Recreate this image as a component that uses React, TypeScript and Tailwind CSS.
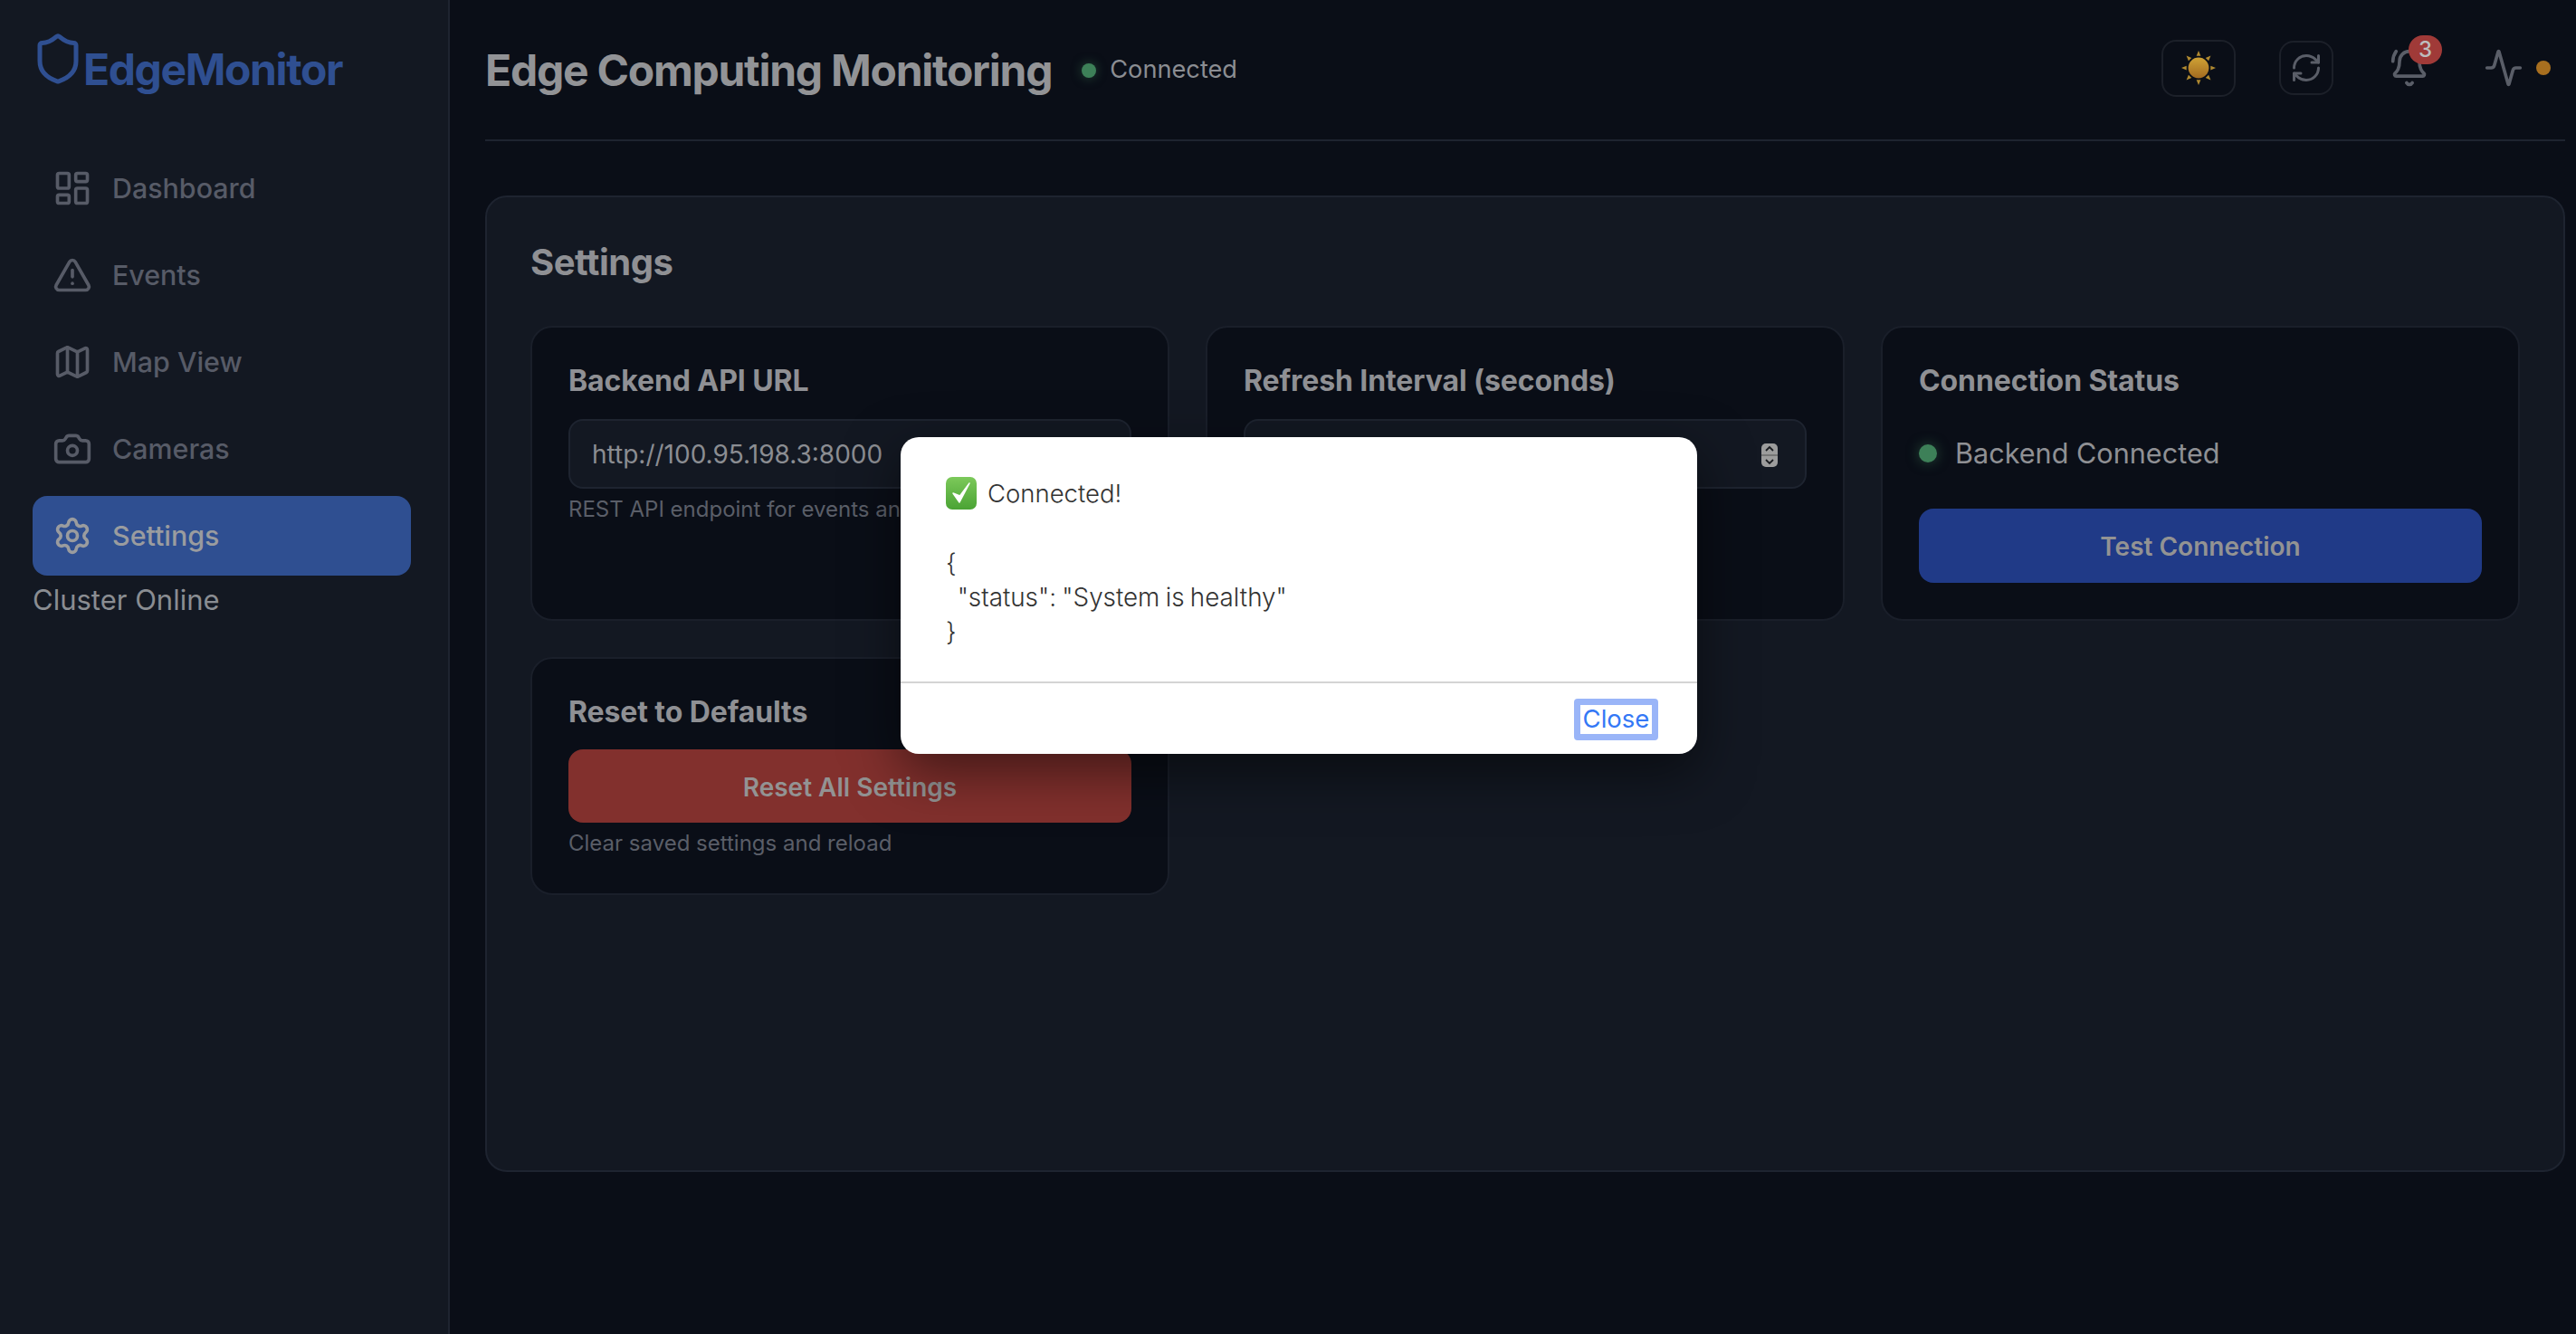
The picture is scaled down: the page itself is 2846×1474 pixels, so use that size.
import { Activity, BellRing, Camera, LayoutDashboard, Map as MapIcon, RefreshCw, Settings, Shield, TriangleAlert } from 'lucide-react';

const navItems = [
  { label: 'Dashboard', icon: LayoutDashboard },
  { label: 'Events', icon: TriangleAlert },
  { label: 'Map View', icon: MapIcon },
  { label: 'Cameras', icon: Camera },
  { label: 'Settings', icon: Settings, active: true },
];

function SunEmoji() {
  const rays = [0, 45, 90, 135, 180, 225, 270, 315];
  return (
    <svg width="38" height="38" viewBox="0 0 40 40">
      <defs>
        <linearGradient id="sunFill" x1="0" y1="0" x2="0" y2="1">
          <stop offset="0" stopColor="#cfa235" />
          <stop offset="1" stopColor="#a26a20" />
        </linearGradient>
      </defs>
      {rays.map((r) => (
        <polygon key={r} points="17.500,6 22.500,6 20,0" fill="#b08a30" transform={`rotate(${r} 20 20)`} />
      ))}
      <circle cx="20" cy="20" r="12" fill="url(#sunFill)" />
    </svg>
  );
}

function CheckEmoji() {
  return (
    <svg width="34" height="36" viewBox="0 0 34 36">
      <defs>
        <linearGradient id="checkFill" x1="0" y1="0" x2="0" y2="1">
          <stop offset="0" stopColor="#7cc95a" />
          <stop offset="1" stopColor="#4aa334" />
        </linearGradient>
      </defs>
      <rect x="0" y="0" width="34" height="36" rx="7" fill="url(#checkFill)" />
      <path d="M8 18l7 10L26 7l-10.500 14z" fill="#fff" stroke="#fff" strokeWidth="1.500" strokeLinejoin="round" />
    </svg>
  );
}

function Spinner() {
  return (
    <svg width="18" height="26" viewBox="0 0 18 26" className="absolute right-[30px] top-[25px]">
      <rect width="18" height="26" rx="5" fill="#9c9c9c" />
      <rect y="12" width="18" height="2" fill="#767676" />
      <path d="M5 8l4-4 4 4M5 18l4 4 4-4" fill="none" stroke="#1a1c20" strokeWidth="1.800" />
    </svg>
  );
}

function Sidebar() {
  return (
    <aside className="flex h-[1474px] w-[497px] shrink-0 flex-col border-r-2 border-[#1e2430] bg-[#131822] pl-[36px] pr-[41px]">
      <div className="flex h-[164px] items-start pl-[2px] pt-[36px]">
        <Shield size={60} strokeWidth={2} className="-mt-[1px] -ml-[4px] -mr-[2px] text-[#2f4f91]" />
        <span className="pt-[12px] text-[48px] font-bold leading-[58px] tracking-[-1.400px] text-[#2f4f91]">EdgeMonitor</span>
      </div>
      <nav className="flex flex-col gap-[8px]">
        {navItems.map(({ label, icon: Icon, active }) => (
          <div
            key={label}
            className={
              active
                ? 'flex h-[88px] items-center gap-[22px] rounded-[16px] bg-[#2f4f91] pl-[22px] text-[#9a9c9f]'
                : 'flex h-[88px] items-center gap-[22px] rounded-[16px] pl-[22px] text-[#575b67]'
            }
          >
            <Icon size={44} strokeWidth={2} />
            <span className="pt-[2px] text-[30.400px] font-medium">{label}</span>
          </div>
        ))}
      </nav>
      <div className="mt-[7px] text-[31px] leading-[40px] text-[#8a8d92]">Cluster Online</div>
    </aside>
  );
}

function Header() {
  return (
    <header className="flex h-[156px] items-center border-b-2 border-[#1e2430] pb-[4px]">
      <div className="flex items-center pt-[5px]">
        <h1 className="text-[48px] font-bold tracking-[-1.250px] text-[#929396]">Edge Computing Monitoring</h1>
        <span className="ml-[33px] h-[16px] w-[16px] rounded-full bg-[#3d8058] shadow-[0_0_12px_rgba(61,128,88,0.5)]" />
        <span className="ml-[15px] text-[27.200px] text-[#8b8d92]">Connected</span>
      </div>
      <div className="ml-auto flex items-center">
        <button className="flex h-[63px] w-[82px] items-center justify-center rounded-[16px] border-2 border-[#1c2029]">
          <SunEmoji />
        </button>
        <button className="ml-[48px] flex h-[60px] w-[60px] items-center justify-center rounded-[16px] border-2 border-[#1c2029] text-[#5a5e68]">
          <RefreshCw size={36} strokeWidth={2} />
        </button>
        <div className="relative ml-[62px] text-[#5a5e68]">
          <BellRing size={44} strokeWidth={2} />
          <span className="absolute -top-[14px] left-[21px] flex h-[32px] w-[37px] items-center justify-center rounded-full bg-[#a03a38] text-[24px] font-medium text-[#bdbdbd]">
            3
          </span>
        </div>
        <Activity size={44} strokeWidth={2} className="ml-[60px] text-[#5a5e68]" />
        <span className="ml-[14px] mr-[16px] h-[16px] w-[16px] rounded-full bg-[#a86f1f]" />
      </div>
    </header>
  );
}

function Card({ title, children }: { title: string; children: React.ReactNode }) {
  return (
    <div className="rounded-[24px] border-2 border-[#1a1f2a] bg-[#0a0e17] p-[40px]">
      <h3 className="text-[32px] font-bold leading-[38px] tracking-[-0.100px] text-[#8f9094]">{title}</h3>
      {children}
    </div>
  );
}

function SettingsPanel() {
  return (
    <section className="mt-[60px] h-[1079px] rounded-[24px] border-2 border-[#1e2430] bg-[#131822] px-[48px] pt-[48px]">
      <h2 className="text-[40px] font-bold leading-[48px] tracking-[-0.500px] text-[#8f9094]">Settings</h2>
      <div className="mt-[46px] grid grid-cols-3 items-stretch gap-x-[40px] gap-y-[40px]">
        <Card title="Backend API URL">
          <div className="mt-[23px] flex h-[77px] items-center rounded-[16px] border-2 border-[#1e2430] bg-[#131822] px-[24px] text-[28px] text-[#8b8d92]">
            http://100.95.198.3:8000
          </div>
          <p className="mt-[8px] text-[24px] leading-[30px] text-[#5a5e68]">REST API endpoint for events and data</p>
        </Card>
        <Card title="Refresh Interval (seconds)">
          <div className="relative mt-[23px] flex h-[77px] items-center rounded-[16px] border-2 border-[#1e2430] bg-[#131822] px-[24px] text-[28px] text-[#8b8d92]">
            5
            <Spinner />
          </div>
        </Card>
        <Card title="Connection Status">
          <div className="mt-[23px] flex h-[76px] items-center gap-[20px]">
            <span className="h-[20px] w-[20px] rounded-full bg-[#3d8058] shadow-[0_0_14px_rgba(61,128,88,0.5)]" />
            <span className="text-[30.600px] text-[#8f9094]">Backend Connected</span>
          </div>
          <button className="mt-[23px] h-[82px] w-full rounded-[16px] bg-[#203a87] pt-[2px] text-[28px] font-semibold text-[#939393]">
            Test Connection
          </button>
        </Card>
        <Card title="Reset to Defaults">
          <button className="mt-[22px] h-[81px] w-full rounded-[16px] bg-[#82302d] pt-[2px] text-[28px] font-semibold text-[#939393]">
            Reset All Settings
          </button>
          <p className="mt-[8px] text-[24px] leading-[30px] text-[#5a5e68]">Clear saved settings and reload</p>
        </Card>
      </div>
    </section>
  );
}

function AlertDialog() {
  return (
    <div className="absolute left-[995px] top-[483px] flex h-[350px] w-[880px] flex-col rounded-[20px] bg-white shadow-[0_20px_60px_rgba(0,0,0,0.5)]">
      <div className="h-[270px] px-[50px] pt-[43px] font-light leading-[38px] text-[#333333]">
        <div className="flex items-center gap-[12px] text-[27.500px]">
          <CheckEmoji />
          <span>Connected!</span>
        </div>
        <pre className="mt-[39px] text-[27.800px] [font-family:inherit] [word-spacing:-1.500px]">{'{\n  "status": "System is healthy"\n}'}</pre>
      </div>
      <div className="flex flex-1 items-start justify-end border-t-2 border-[#d4d4d4] pr-[43px] pt-[17px]">
        <button className="flex h-[46px] w-[93px] items-center justify-center rounded-[4px] border-[7px] border-[#9ab5f8] text-[27.500px] text-[#3478f6]">
          Close
        </button>
      </div>
    </div>
  );
}

export default function App() {
  return (
    <div className="relative flex h-[1474px] w-[2846px] overflow-hidden bg-[#0a0e17] [font-family:Inter,sans-serif]">
      <Sidebar />
      <main className="min-w-0 flex-1 pl-[39px] pr-[12px]">
        <Header />
        <SettingsPanel />
      </main>
      <AlertDialog />
    </div>
  );
}
